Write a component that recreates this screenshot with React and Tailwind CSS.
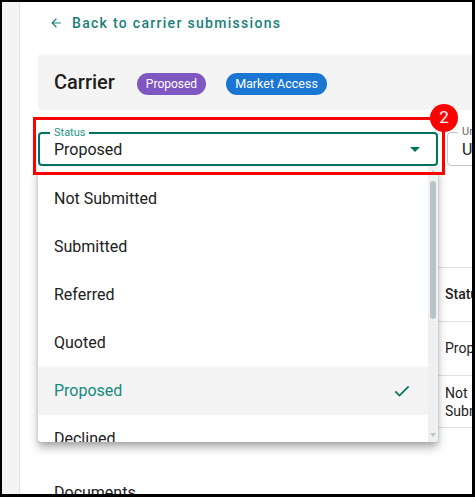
import React from "react";

const statuses = ["Not Submitted", "Submitted", "Referred", "Quoted", "Proposed", "Declined"];

function App() {
    const selected = "Proposed";

    return (
        <div className="w-[475px] h-[497px] bg-black pt-[2px] pl-[2px] pr-[3px] pb-[3px] overflow-hidden" style={{ fontFamily: "Roboto, 'Liberation Sans', sans-serif" }}>
            <div className="flex h-full bg-white overflow-hidden">
                {/* Side strip */}
                <div className="w-[18px] shrink-0 bg-[#f4f4f4] border-r border-[#e3e3e3]" />

                <main className="relative flex-1 min-w-0 pl-[18px]">
                    {/* Back link */}
                    <div className="h-[53px] pt-[11px] pl-[11px]">
                        <div className="flex items-center gap-[9px] text-[#1b7f79] text-[14px] leading-[20px] font-medium tracking-[1.3px]">
                            <svg width="14" height="14" viewBox="0 0 24 24" fill="currentColor">
                                <path d="M20 11H7.83l5.59-5.59L12 4l-8 8 8 8 1.41-1.41L7.83 13H20v-2z" />
                            </svg>
                            <span>Back to carrier submissions</span>
                        </div>
                    </div>

                    {/* Header */}
                    <div className="h-[55px] bg-[#f4f4f4] flex items-center pl-[16px]">
                        <h1 className="text-[20px] font-medium text-[#1f1f1f] mr-[22px] -mt-[1px]">Carrier</h1>
                        <span className="h-[22px] mt-[3px] px-[9px] rounded-full bg-[#7e57c2] text-white text-[12px] flex items-center mr-[20px]">Proposed</span>
                        <span className="h-[22px] mt-[3px] px-[9px] rounded-full bg-[#1976d2] text-white text-[12.5px] flex items-center">Market Access</span>
                    </div>

                    {/* Fields */}
                    <div className="flex gap-[9px] mt-[22px]">
                        <div className="relative w-[400px] h-[34px] shrink-0 border-2 border-[#00735f] rounded-[4px] flex items-center pl-[14px] pr-[14px]">
                            <span className="absolute -top-[8px] left-[10px] bg-white px-[4px] text-[11px] leading-[14px] text-[#23978c]">Status</span>
                            <span className="text-[16px] text-[#212121] flex-1 pt-[1px]">Proposed</span>
                            <svg width="10" height="5" viewBox="0 0 10 5" fill="#00735f" className="mr-[2px]">
                                <path d="M0 0l5 5 5-5z" />
                            </svg>
                        </div>
                        <div className="relative w-[200px] h-[34px] shrink-0 border border-[#c4c4c4] rounded-[4px] flex items-center pl-[14px]">
                            <span className="absolute -top-[8px] left-[10px] bg-white px-[4px] text-[11px] leading-[14px] text-[#666]">Underwriter</span>
                            <span className="text-[16px] text-[#212121] pt-[1px]">Unassigned</span>
                        </div>
                    </div>

                    {/* Table behind */}
                    <div className="mt-[101px] text-[14px] text-[#212121]">
                        <div className="flex h-[55px] border-t border-b border-[#e0e0e0]">
                            <div className="w-[400px] shrink-0" />
                            <div className="pl-[7px] flex items-center font-medium">Status</div>
                        </div>
                        <div className="flex h-[54px] border-b border-[#e0e0e0]">
                            <div className="w-[400px] shrink-0" />
                            <div className="pl-[7px] flex items-center">Proposed</div>
                        </div>
                        <div className="flex h-[52px] border-b border-[#e0e0e0]">
                            <div className="w-[400px] shrink-0" />
                            <div className="pl-[7px] w-[40px] flex items-center leading-[18px]">Not Submitted</div>
                        </div>
                    </div>

                    <div className="mt-[53px] pl-[16px] text-[16px] text-[#212121]">Documents</div>

                    {/* Dropdown menu */}
                    <div className="absolute left-[18px] top-[165px] w-[400px] h-[275px] bg-white rounded-b-[4px] shadow-[0_6px_10px_rgba(0,0,0,0.28),0_2px_4px_rgba(0,0,0,0.12)] flex overflow-hidden">
                        <ul className="flex-1 pt-[8px]">
                            {statuses.map((s) => (
                                <li
                                    key={s}
                                    className={
                                        s === selected
                                            ? "h-[48px] flex items-center justify-between pl-[16px] pr-[16px] text-[16px] bg-[#f4f4f4] text-[#138a80]"
                                            : "h-[48px] flex items-center pl-[16px] text-[16px] text-[#212121]"
                                    }
                                >
                                    <span>{s}</span>
                                    {s === selected && (
                                        <svg width="20" height="20" viewBox="0 0 24 24" fill="none" stroke="#00735f" strokeWidth="2">
                                            <path d="M4 12.5l5 5L20 6.5" />
                                        </svg>
                                    )}
                                </li>
                            ))}
                        </ul>
                        {/* Scrollbar */}
                        <div className="w-[10px] bg-[#eef0f1] flex flex-col items-center">
                            <svg width="6" height="4" viewBox="0 0 6 4" fill="#b8c4ca" className="mt-[3px]">
                                <path d="M0 4l3-4 3 4z" />
                            </svg>
                            <div className="w-[6px] h-[138px] mt-[7px] rounded-full bg-[#b8c4ca]" />
                            <div className="flex-1" />
                            <svg width="6" height="4" viewBox="0 0 6 4" fill="#b8c4ca" className="mb-[5px]">
                                <path d="M0 0l3 4 3-4z" />
                            </svg>
                        </div>
                    </div>

                    {/* Annotation */}
                    <div className="absolute left-[13px] top-[115px] w-[412px] h-[58px] border-[3px] border-[#ff0000] pointer-events-none" />
                    <div className="absolute left-[410px] top-[102px] w-[28px] h-[28px] rounded-full bg-[#ff0000] text-white text-[17px] flex items-center justify-center">2</div>
                </main>
            </div>
        </div>
    );
}

export default App;
